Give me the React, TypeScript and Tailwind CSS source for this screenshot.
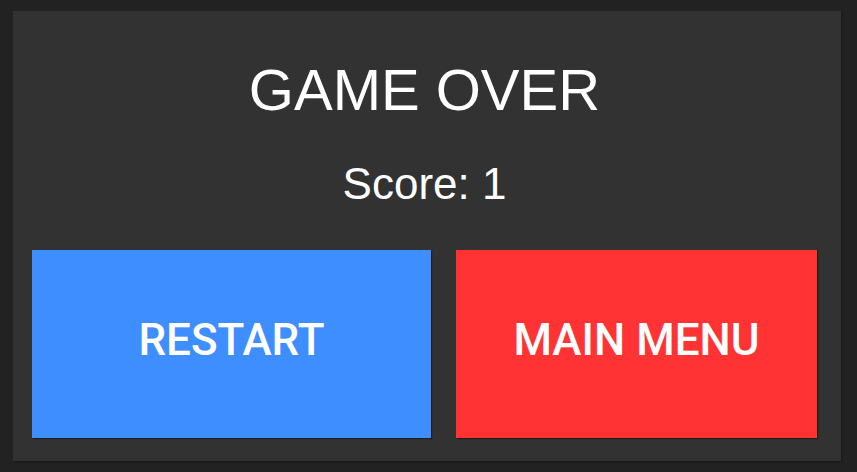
export default function App() {
  return (
    <div className="w-[857px] h-[472px] bg-[#222222] pt-[11px] pb-[11px] pl-[13px] pr-[16px] font-['Liberation_Sans',Arial,sans-serif]">
      <div className="h-full bg-[#323232] shadow-[1px_1px_2px_rgba(0,0,0,0.35)] flex flex-col pl-[19px] pr-[24px]">
        <h1 className="text-white text-[58px] leading-none text-center mt-[50px]">GAME OVER</h1>
        <p className="text-white text-[44px] leading-none text-center mt-[43px]">Score: 1</p>
        <div className="flex gap-[25px] mt-[44px] h-[188px]">
          <button className="w-[399px] pb-[8px] bg-[#3e8eff] text-white shadow-[1px_1px_1px_rgba(0,0,0,0.4)] font-['Roboto',sans-serif] font-medium text-[44px]">
            RESTART
          </button>
          <button className="flex-1 pb-[8px] bg-[#ff3334] text-white shadow-[1px_1px_1px_rgba(0,0,0,0.4)] font-['Roboto',sans-serif] font-medium text-[44px]">
            MAIN MENU
          </button>
        </div>
      </div>
    </div>
  )
}
